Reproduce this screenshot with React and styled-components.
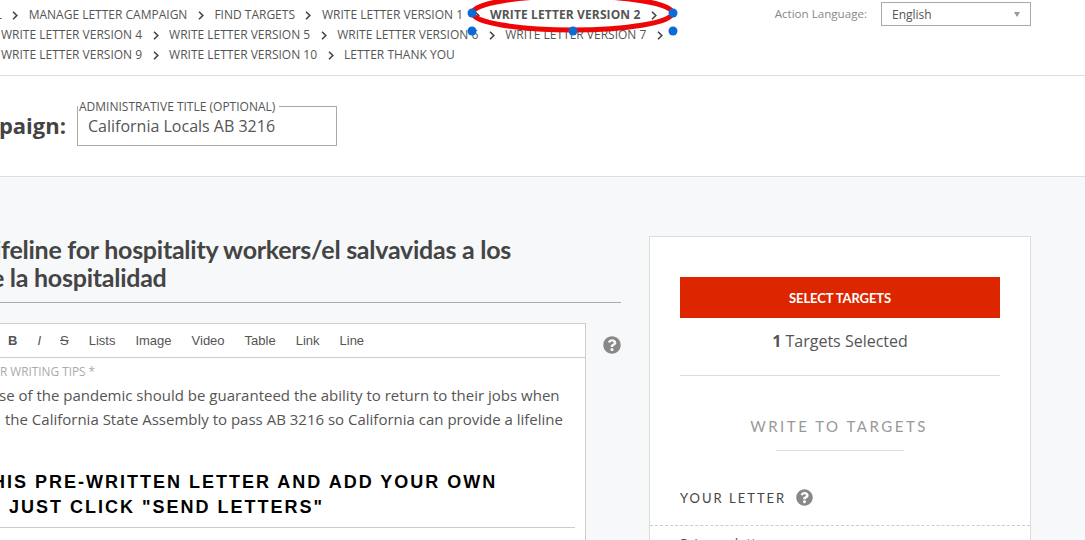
import React from "react";
import styled, { createGlobalStyle } from "styled-components";
import { FaQuestionCircle } from "react-icons/fa";

const Global = createGlobalStyle`
  html, body { margin: 0; padding: 0; background: #f7f8fa; }
  * { box-sizing: border-box; }
`;

const Page = styled.div`
  position: relative;
  width: 1085px;
  height: 540px;
  overflow: hidden;
  background: #f7f8fa;
  font-family: "Open Sans", sans-serif;
  color: #555;
`;

const TopBar = styled.header`
  display: flex;
  justify-content: space-between;
  height: 76px;
  padding: 2px 54px 0 0;
  background: #fff;
  border-bottom: 1px solid #ddd;
`;

const Steps = styled.nav`
  display: flex;
  flex-direction: column;
  padding-top: 3px;
`;

const StepRow = styled.div`
  display: flex;
  align-items: center;
  height: 20px;
  margin-left: ${(p) => p.$offset || 0}px;
  white-space: nowrap;
`;

const Step = styled.span`
  font-size: 12px;
  line-height: 20px;
  color: #555;
  text-transform: uppercase;
  font-weight: ${(p) => (p.$active ? 700 : 400)};
  letter-spacing: ${(p) => (p.$active ? "0.12px" : "0")};
`;

const Chevron = styled.svg`
  flex: none;
  width: 6px;
  height: 9px;
  margin: 0 10.5px;
  fill: none;
  stroke: #444;
  stroke-width: 1.6;
`;

const LanguagePicker = styled.div`
  display: flex;
  align-items: flex-start;
  gap: 14px;
`;

const LanguageLabel = styled.span`
  font-size: 11.6px;
  line-height: 24px;
  color: #888;
`;

const SelectBox = styled.div`
  display: flex;
  align-items: center;
  justify-content: space-between;
  width: 150px;
  height: 24px;
  padding: 0 10px;
  border: 1px solid #aaa;
  font-size: 12px;
  color: #555;
`;

const Caret = styled.span`
  width: 0;
  height: 0;
  border-left: 3px solid transparent;
  border-right: 3px solid transparent;
  border-top: 5px solid #999;
`;

const TitleBar = styled.section`
  display: flex;
  align-items: flex-start;
  gap: 11px;
  height: 101px;
  background: #fff;
  border-bottom: 1px solid #ddd;
  margin-left: -50px;
`;

const CampaignLabel = styled.h2`
  margin: 30px 0 0;
  font-size: 22px;
  line-height: 38px;
  font-weight: 700;
  color: #444;
`;

const Field = styled.fieldset`
  width: 260px;
  height: 47px;
  margin: 23px 0 0;
  padding: 0;
  border: 1px solid #aaa;
`;

const FieldLegend = styled.legend`
  margin-left: 0;
  padding: 0 4px 0 1px;
  font-size: 12px;
  line-height: 14px;
  color: #555;
  transform: translateY(1px);
`;

const FieldValue = styled.div`
  font-size: 16px;
  line-height: 24px;
  margin-top: 1px;
  padding-left: 10px;
  color: #555;
`;

const Main = styled.main`
  display: flex;
  align-items: flex-start;
  padding-top: 59px;
`;

const Left = styled.div`
  flex: none;
  width: 621px;
  margin-right: 28px;
`;

const Title = styled.h1`
  margin: -1px 0 9px;
  padding-bottom: 11px;
  border-bottom: 1px solid #aaa;
  font-family: Lato, sans-serif;
  font-size: 25px;
  line-height: 28px;
  font-weight: 700;
  letter-spacing: -0.26px;
  color: #444;
`;

const TitleLine = styled.span`
  display: block;
  margin-left: ${(p) => p.$offset}px;
  white-space: nowrap;
`;

const EditorRow = styled.div`
  display: flex;
  align-items: flex-start;
  margin-top: 20px;
`;

const Editor = styled.div`
  flex: none;
  width: 586px;
  height: 300px;
  background: #fff;
  border: 1px solid #ccc;
  border-left: 0;
`;

const Toolbar = styled.div`
  display: flex;
  align-items: center;
  height: 34px;
  padding-left: 8px;
  border-bottom: 1px solid #ccc;
  font-family: "Liberation Sans", Arial, sans-serif;
  font-size: 13px;
  color: #555;
`;

const ToolButton = styled.span`
  margin-right: ${(p) => p.$gap}px;
  font-weight: ${(p) => (p.$bold ? 700 : 400)};
  font-style: ${(p) => (p.$italic ? "italic" : "normal")};
  text-decoration: ${(p) => (p.$strike ? "line-through" : "none")};
`;

const Placeholder = styled.div`
  height: 25px;
  padding-top: 6px;
  font-size: 11.8px;
  line-height: 14px;
  color: #aaa;
  margin-left: ${(p) => p.$offset}px;
  white-space: nowrap;
`;

const BodyLine = styled.p`
  margin: 0 0 0 ${(p) => p.$offset}px;
  font-size: 15px;
  line-height: 24px;
  color: #555;
  white-space: nowrap;
`;

const Callout = styled.div`
  margin: 39px 10px 0 0;
  padding-bottom: 7px;
  border-bottom: 1px solid #ccc;
  font-family: "Liberation Sans", Arial, sans-serif;
  font-size: 18px;
  line-height: 25px;
  font-weight: 700;
  letter-spacing: 2px;
  color: #000;
`;

const CalloutLine = styled.span`
  display: block;
  margin-left: ${(p) => p.$offset}px;
  white-space: nowrap;
`;

const HelpIcon = styled(FaQuestionCircle)`
  flex: none;
  color: #888;
  font-size: ${(p) => p.$size}px;
  margin: ${(p) => p.$margin};
`;

const Card = styled.aside`
  flex: none;
  width: 382px;
  height: 320px;
  padding: 40px 30px 0;
  background: #fff;
  border: 1px solid #ddd;
`;

const PrimaryButton = styled.button`
  display: block;
  width: 320px;
  height: 41px;
  padding: 0;
  border: 0;
  background: #dd2600;
  color: #fff;
  font-family: Lato, sans-serif;
  font-size: 13px;
  font-weight: 700;
  letter-spacing: -0.1px;
  text-transform: uppercase;
`;

const Selected = styled.div`
  height: 58px;
  padding-top: 11px;
  border-bottom: 1px solid #ddd;
  text-align: center;
  font-size: 16px;
  line-height: 24px;
  color: #555;
`;

const SectionTitle = styled.h3`
  width: 128px;
  margin: 39px auto 0;
  padding: 0 2px 13px 0;
  border-bottom: 1px solid #ddd;
  display: flex;
  justify-content: center;
  white-space: nowrap;
  font-family: Lato, sans-serif;
  font-size: 15px;
  line-height: 22px;
  font-weight: 400;
  letter-spacing: 2.5px;
  color: #999;
`;

const LetterHeader = styled.div`
  display: flex;
  align-items: center;
  height: 26px;
  margin-top: 34px;
`;

const LetterLabel = styled.span`
  font-family: Lato, sans-serif;
  font-size: 13px;
  letter-spacing: 2px;
  color: #444;
`;

const Dashed = styled.div`
  margin: 14px -30px 0;
  border-top: 1px dashed #ccc;
`;

const LetterOption = styled.div`
  margin-top: 8px;
  font-size: 14px;
  line-height: 20px;
  color: #555;
`;

const Markup = styled.svg`
  position: absolute;
  left: 0;
  top: 0;
  width: 1085px;
  height: 40px;
  pointer-events: none;
`;

const Chev = () => (
  <Chevron viewBox="0 0 6 9">
    <path d="M1 .8 4.8 4.5 1 8.2" />
  </Chevron>
);

const handles = [
  [472, 13],
  [673, 13],
  [472, 31],
  [573, 31],
  [673, 31],
];

export default function App() {
  return (
    <Page>
      <Global />
      <TopBar>
        <Steps>
          <StepRow $offset={-33}>
            <Step>Email</Step>
            <Chev />
            <Step>Manage Letter Campaign</Step>
            <Chev />
            <Step>Find Targets</Step>
            <Chev />
            <Step>Write Letter Version 1</Step>
            <Chev />
            <Step $active>Write Letter Version 2</Step>
            <Chev />
          </StepRow>
          <StepRow $offset={1}>
            <Step>Write Letter Version 4</Step>
            <Chev />
            <Step>Write Letter Version 5</Step>
            <Chev />
            <Step>Write Letter Version 6</Step>
            <Chev />
            <Step>Write Letter Version 7</Step>
            <Chev />
          </StepRow>
          <StepRow $offset={1}>
            <Step>Write Letter Version 9</Step>
            <Chev />
            <Step>Write Letter Version 10</Step>
            <Chev />
            <Step>Letter Thank You</Step>
          </StepRow>
        </Steps>
        <LanguagePicker>
          <LanguageLabel>Action Language:</LanguageLabel>
          <SelectBox>
            English
            <Caret />
          </SelectBox>
        </LanguagePicker>
      </TopBar>

      <TitleBar>
        <CampaignLabel>Campaign:</CampaignLabel>
        <Field>
          <FieldLegend>ADMINISTRATIVE TITLE (OPTIONAL)</FieldLegend>
          <FieldValue>California Locals AB 3216</FieldValue>
        </Field>
      </TitleBar>

      <Main>
        <Left>
          <Title>
            <TitleLine $offset={-33}>A lifeline for hospitality workers/el salvavidas a los</TitleLine>
            <TitleLine $offset={-23}>de la hospitalidad</TitleLine>
          </Title>
          <EditorRow>
            <Editor>
              <Toolbar>
                <ToolButton $bold $gap={20}>B</ToolButton>
                <ToolButton $italic $gap={19}>I</ToolButton>
                <ToolButton $strike $gap={20}>S</ToolButton>
                <ToolButton $gap={20}>Lists</ToolButton>
                <ToolButton $gap={20}>Image</ToolButton>
                <ToolButton $gap={20}>Video</ToolButton>
                <ToolButton $gap={20}>Table</ToolButton>
                <ToolButton $gap={20}>Link</ToolButton>
                <ToolButton $gap={0}>Line</ToolButton>
              </Toolbar>
              <Placeholder $offset={0}>R WRITING TIPS *</Placeholder>
              <BodyLine $offset={-1}>se of the pandemic should be guaranteed the ability to return to their jobs when</BodyLine>
              <BodyLine $offset={5}>the California State Assembly to pass AB 3216 so California can provide a lifeline</BodyLine>
              <Callout>
                <CalloutLine $offset={-8}>HIS PRE-WRITTEN LETTER AND ADD YOUR OWN</CalloutLine>
                <CalloutLine $offset={9}>JUST CLICK "SEND LETTERS"</CalloutLine>
              </Callout>
            </Editor>
            <HelpIcon $size={18} $margin="13px 0 0 17px" />
          </EditorRow>
        </Left>
        <Card>
          <PrimaryButton>Select Targets</PrimaryButton>
          <Selected>
            <b>1</b> Targets Selected
          </Selected>
          <SectionTitle>WRITE TO TARGETS</SectionTitle>
          <LetterHeader>
            <LetterLabel>YOUR LETTER</LetterLabel>
            <HelpIcon $size={17} $margin="-2px 0 0 10px" />
          </LetterHeader>
          <Dashed />
          <LetterOption>Primary letter</LetterOption>
        </Card>
      </Main>

      <Markup viewBox="0 0 1085 40">
        <ellipse cx="572.5" cy="13" rx="100" ry="17" fill="none" stroke="#ee0505" strokeWidth="5" />
        {handles.map(([cx, cy]) => (
          <circle key={`${cx}-${cy}`} cx={cx} cy={cy} r="4.5" fill="#0a6cd6" />
        ))}
      </Markup>
    </Page>
  );
}
